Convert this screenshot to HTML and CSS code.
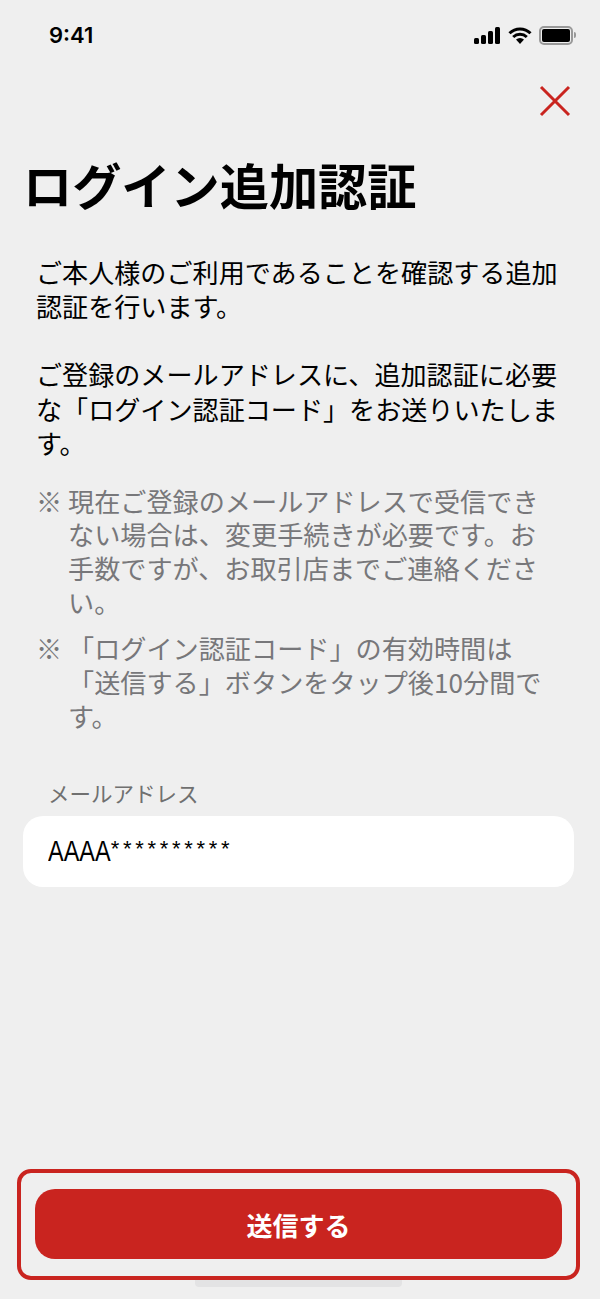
FILE: index.html
```html
<!DOCTYPE html>
<html lang="ja">
<head>
<meta charset="utf-8">
<title>ログイン追加認証</title>
<link rel="stylesheet" href="styles.css">
</head>
<body>
<main class="screen">
  <header class="status">
    <span class="time">9:41</span>
    <span class="status-icons">
      <svg class="signal" width="26" height="17" viewBox="0 0 26 17"><rect x="0" y="11" width="5" height="6" rx="1.5"/><rect x="7" y="8" width="5" height="9" rx="1.5"/><rect x="14" y="4" width="5" height="13" rx="1.5"/><rect x="21" y="0" width="5" height="17" rx="1.5"/></svg>
      <svg class="wifi" width="24" height="17" viewBox="0 0 24 17"><path d="M1.5 6.2a15 15 0 0 1 21 0M5.2 10a10 10 0 0 1 13.6 0" fill="none" stroke="#000" stroke-width="3"/><path d="M8 12.6a6 6 0 0 1 8 0L12 17z"/></svg>
      <span class="battery"><span class="battery-fill"></span></span>
      <span class="battery-tip"></span>
    </span>
  </header>
  <div class="close-row">
    <svg class="close" width="32" height="32" viewBox="0 0 32 32"><path d="M2 2 30 30M30 2 2 30" stroke="#c9241f" stroke-width="3" fill="none"/></svg>
  </div>
  <h1 class="title">ログイン追加認証</h1>
  <section class="intro">
    <p>ご本人様のご利用であることを確認する追加認証を行います。</p>
    <p>ご登録のメールアドレスに、追加認証に必要な「ログイン認証コード」をお送りいたします。</p>
  </section>
  <ul class="notes">
    <li><span class="mark">※</span><span>現在ご登録のメールアドレスで受信できない場合は、変更手続きが必要です。お手数ですが、お取引店までご連絡ください。</span></li>
    <li><span class="mark">※</span><span>「ログイン認証コード」の有効時間は「送信する」ボタンをタップ後10分間です。</span></li>
  </ul>
  <div class="field-label">メールアドレス</div>
  <div class="field"><span class="field-lead">AAAA</span><span class="field-mask">**********</span></div>
  <div class="spacer"></div>
  <div class="action-frame">
    <button class="submit" type="button">送信する</button>
  </div>
  <div class="home-bar"></div>
</main>
</body>
</html>
```
FILE: styles.css
```css
* { box-sizing: border-box; }
html, body { margin: 0; padding: 0; background: #fff; }
body { font-family: "Noto Sans CJK JP", "Liberation Sans", sans-serif; color: #000; }
.screen {
  width: 600px; height: 1299px; background: #efefef;
  display: flex; flex-direction: column; overflow: hidden;
}
.status {
  height: 70px; padding: 0 24px 0 49px;
  display: flex; justify-content: space-between; align-items: center;
}
.time { font-family: Inter, "Liberation Sans", sans-serif; font-size: 22px; font-weight: 600; }
.status-icons { display: flex; align-items: center; }
.signal { margin-right: 8px; }
.wifi { margin-right: 7px; }
.battery {
  width: 34px; height: 19px; border: 2px solid #999; border-radius: 5px;
  padding: 1px; display: block;
}
.battery-fill { display: block; height: 100%; background: #000; border-radius: 2px; }
.battery-tip { width: 2px; height: 6px; background: #999; margin-left: 1px; border-radius: 0 2px 2px 0; }
.close-row { display: flex; justify-content: flex-end; padding: 15px 29px 0 0; height: 47px; }
.close { display: block; }
.title {
  margin: 35px 0 0 23px; font-size: 49.2px; line-height: 64px; font-weight: 700;
}
.intro { margin: 39px 0 0; padding: 0 36px; font-size: 26.1px; line-height: 34.2px; }
.intro p { margin: 0 0 34px; }
.notes {
  list-style: none; margin: -9.5px 0 0; padding: 0 58px 0 36px;
  font-size: 26.15px; line-height: 33.9px; color: #77777a;
}
.notes li { display: flex; margin-bottom: 12px; }
.mark { flex: none; width: 32px; }
.field-label { margin: 32.5px 0 0 48px; font-size: 21.5px; line-height: 30px; color: #707070; }
.field {
  margin: 8px 26px 0 23px; height: 71px; background: #fff; border-radius: 20px;
  padding: 0 25px; display: flex; align-items: center;
  font-family: "Liberation Sans", sans-serif; font-size: 29px;
}
.field-lead { display: block; transform: scaleX(0.81); transform-origin: left center; margin-right: -14.7px; }
.field-mask { font-size: 22px; letter-spacing: 3.7px; margin-bottom: 5px; }
.spacer { flex: 1; }
.action-frame {
  margin: 0 20px 0 17px; height: 111px; border: 4px solid #c9241f; border-radius: 14px;
  padding: 16px 14px;
}
.submit {
  width: 100%; height: 70px; border: 0; border-radius: 20px; background: #c9241f;
  color: #fff; font: 700 26px "Noto Sans CJK JP", sans-serif; display: block; padding: 0;
}
.home-bar {
  width: 207px; height: 7px; margin: 0 0 12px 195px; background: #e3e3e4;
  border-radius: 0 0 4px 4px; flex: none;
}
```
